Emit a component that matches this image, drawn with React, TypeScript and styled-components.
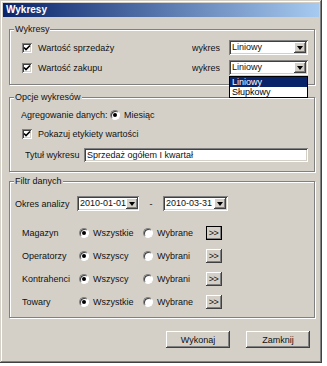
import React from "react";
import styled, { createGlobalStyle } from "styled-components";

const GlobalStyle = createGlobalStyle`
  html, body { margin: 0; padding: 0; background: #fff; }
  body { font-family: "Liberation Sans", Arial, sans-serif; font-size: 9px; color: #111; }
  * { box-sizing: border-box; }
`;

const FACE = "#d4d0c8";

const Window = styled.div`
  width: 322px;
  height: 363px;
  background: ${FACE};
  padding: 3px;
  box-shadow: inset -1px -1px #404040, inset 1px 1px ${FACE}, inset -2px -2px #808080, inset 2px 2px #fff;
  display: flex;
  flex-direction: column;
`;

const TitleBar = styled.div`
  height: 14px;
  background: linear-gradient(to right, #0a246a, #a6caf0);
  color: #fff;
  font-weight: bold;
  font-size: 10px;
  line-height: 14px;
  padding-left: 3px;
`;

const Body = styled.div`
  flex: 1;
  display: flex;
  flex-direction: column;
  padding: 12px 4px 0 6px;
`;

const GroupBox = styled.div<{ $mt: number; $pb: number }>`
  margin-top: ${(p) => p.$mt}px;
  border: 1px solid #808080;
  box-shadow: inset 1px 1px #fff, 1px 1px #fff;
  display: flex;
  flex-direction: column;
  padding: 0 6px ${(p) => p.$pb}px 12px;
`;

const Legend = styled.div`
  align-self: flex-start;
  margin: -6px 0 0 -8px;
  padding: 0 1px;
  background: ${FACE};
  line-height: 11px;
`;

const Row = styled.div<{ $mt: number; $h?: number }>`
  display: flex;
  align-items: center;
  height: ${(p) => p.$h ?? 15}px;
  margin-top: ${(p) => p.$mt}px;
  white-space: nowrap;
`;

const Sunken = `
  background: #fff;
  box-shadow: inset 1px 1px #808080, inset -1px -1px #fff, inset 2px 2px #404040, inset -2px -2px ${FACE};
`;

const Raised = `
  background: ${FACE};
  box-shadow: inset -1px -1px #404040, inset 1px 1px #fff, inset -2px -2px #808080, inset 2px 2px ${FACE};
`;

const CheckBox = styled.span`
  width: 10px;
  height: 10px;
  flex: none;
  display: flex;
  align-items: center;
  justify-content: center;
  ${Sunken}
`;

const CheckText = styled.span`
  margin-left: 6px;
`;

const Radio = styled.span<{ $on?: boolean }>`
  width: 10px;
  height: 10px;
  flex: none;
  border-radius: 50%;
  background: #fff;
  border: 1px solid;
  border-color: #808080 #fff #fff #808080;
  box-shadow: inset 1px 1px #404040;
  display: flex;
  align-items: center;
  justify-content: center;
  &::after {
    content: "";
    width: 4px;
    height: 4px;
    border-radius: 50%;
    background: ${(p) => (p.$on ? "#000" : "transparent")};
  }
`;

const RadioOption = styled.span<{ $w: number }>`
  display: flex;
  align-items: center;
  width: ${(p) => p.$w}px;
  flex: none;
`;

const RadioText = styled.span`
  margin-left: 4px;
`;

const Label = styled.span<{ $w?: number; $ml?: number }>`
  width: ${(p) => (p.$w ? `${p.$w}px` : "auto")};
  margin-left: ${(p) => p.$ml ?? 0}px;
  flex: none;
  overflow: hidden;
`;

const Spacer = styled.span`
  flex: 1;
`;

const ComboBox = styled.div<{ $w: number }>`
  position: relative;
  width: ${(p) => p.$w}px;
  height: 15px;
  flex: none;
  display: flex;
  align-items: center;
  padding: 2px 2px 2px 3px;
  ${Sunken}
`;

const ComboText = styled.span`
  flex: 1;
  line-height: 11px;
`;

const ArrowBtn = styled.span`
  width: 12px;
  height: 11px;
  flex: none;
  display: flex;
  align-items: center;
  justify-content: center;
  ${Raised}
  &::after {
    content: "";
    border-left: 3.5px solid transparent;
    border-right: 3.5px solid transparent;
    border-top: 4px solid #000;
    margin-top: 1px;
  }
`;

const DropList = styled.div`
  position: absolute;
  top: 100%;
  left: 0;
  width: 100%;
  margin-top: 1px;
  background: #fff;
  border: 1px solid #000;
  z-index: 5;
  display: flex;
  flex-direction: column;
`;

const DropItem = styled.div<{ $sel?: boolean }>`
  height: 10px;
  line-height: 10px;
  padding-left: 2px;
  background: ${(p) => (p.$sel ? "#0a246a" : "#fff")};
  color: ${(p) => (p.$sel ? "#fff" : "#000")};
`;

const TextField = styled.div`
  flex: 1;
  height: 14px;
  line-height: 14px;
  padding-left: 3px;
  ${Sunken}
`;

const Dash = styled.span`
  width: 24px;
  text-align: center;
  flex: none;
`;

const SmallBtn = styled.span<{ $focus?: boolean }>`
  width: 16px;
  height: 14px;
  flex: none;
  display: flex;
  align-items: center;
  justify-content: center;
  font-size: 9px;
  letter-spacing: -0.5px;
  padding-right: 1px;
  ${Raised}
  ${(p) => (p.$focus ? "outline: 1px solid #000; outline-offset: -1px;" : "")}
`;

const ButtonRow = styled.div`
  display: flex;
  justify-content: flex-end;
  gap: 16px;
  margin-top: 13px;
  padding-right: 5px;
`;

const Button = styled.span`
  width: 64px;
  height: 17px;
  display: flex;
  align-items: center;
  justify-content: center;
  ${Raised}
`;

const Check = () => (
  <CheckBox>
    <svg width="8" height="8" viewBox="0 0 8 8">
      <path d="M1 3.5 L3 5.5 L7 1.5" fill="none" stroke="#000" strokeWidth="1.6" />
    </svg>
  </CheckBox>
);

const Combo = ({ w, text, open }: { w: number; text: string; open?: boolean }) => (
  <ComboBox $w={w}>
    <ComboText>{text}</ComboText>
    <ArrowBtn />
    {open && (
      <DropList>
        <DropItem $sel>Liniowy</DropItem>
        <DropItem>Słupkowy</DropItem>
      </DropList>
    )}
  </ComboBox>
);

const filters = [
  { label: "Magazyn", all: "Wszystkie", sel: "Wybrane" },
  { label: "Operatorzy", all: "Wszyscy", sel: "Wybrani" },
  { label: "Kontrahenci", all: "Wszyscy", sel: "Wybrani" },
  { label: "Towary", all: "Wszystkie", sel: "Wybrane" },
];

export default function App() {
  return (
    <>
      <GlobalStyle />
      <Window>
        <TitleBar>Wykresy</TitleBar>
        <Body>
          <GroupBox $mt={0} $pb={9}>
            <Legend>Wykresy</Legend>
            <Row $mt={5}>
              <Check />
              <CheckText>Wartość sprzedaży</CheckText>
              <Spacer />
              <Label>wykres</Label>
              <Label $ml={9} />
              <Combo w={79} text="Liniowy" />
            </Row>
            <Row $mt={5}>
              <Check />
              <CheckText>Wartość zakupu</CheckText>
              <Spacer />
              <Label>wykres</Label>
              <Label $ml={9} />
              <Combo w={79} text="Liniowy" open />
            </Row>
          </GroupBox>

          <GroupBox $mt={12} $pb={9}>
            <Legend>Opcje wykresów</Legend>
            <Row $mt={5} $h={14}>
              <Label $w={89} $ml={-1}>Agregowanie danych:</Label>
              <RadioOption $w={60}>
                <Radio $on />
                <RadioText>Miesiąc</RadioText>
              </RadioOption>
            </Row>
            <Row $mt={5} $h={14}>
              <Check />
              <CheckText>Pokazuj etykiety wartości</CheckText>
            </Row>
            <Row $mt={7} $h={14}>
              <Label $w={59} $ml={3}>Tytuł wykresu</Label>
              <TextField>Sprzedaż ogółem I kwartał</TextField>
            </Row>
          </GroupBox>

          <GroupBox $mt={9} $pb={8}>
            <Legend>Filtr danych</Legend>
            <Row $mt={9}>
              <Label $w={62} $ml={-7}>Okres analizy</Label>
              <Combo w={62} text="2010-01-01" />
              <Dash>-</Dash>
              <Combo w={65} text="2010-03-31" />
            </Row>
            {filters.map((f, i) => (
              <Row key={f.label} $mt={i === 0 ? 15 : 9} $h={14}>
                <Label $w={57}>{f.label}</Label>
                <RadioOption $w={64}>
                  <Radio $on />
                  <RadioText>{f.all}</RadioText>
                </RadioOption>
                <RadioOption $w={63}>
                  <Radio />
                  <RadioText>{f.sel}</RadioText>
                </RadioOption>
                <SmallBtn $focus={i === 0}>&gt;&gt;</SmallBtn>
              </Row>
            ))}
          </GroupBox>

          <ButtonRow>
            <Button>Wykonaj</Button>
            <Button>Zamknij</Button>
          </ButtonRow>
        </Body>
      </Window>
    </>
  );
}
